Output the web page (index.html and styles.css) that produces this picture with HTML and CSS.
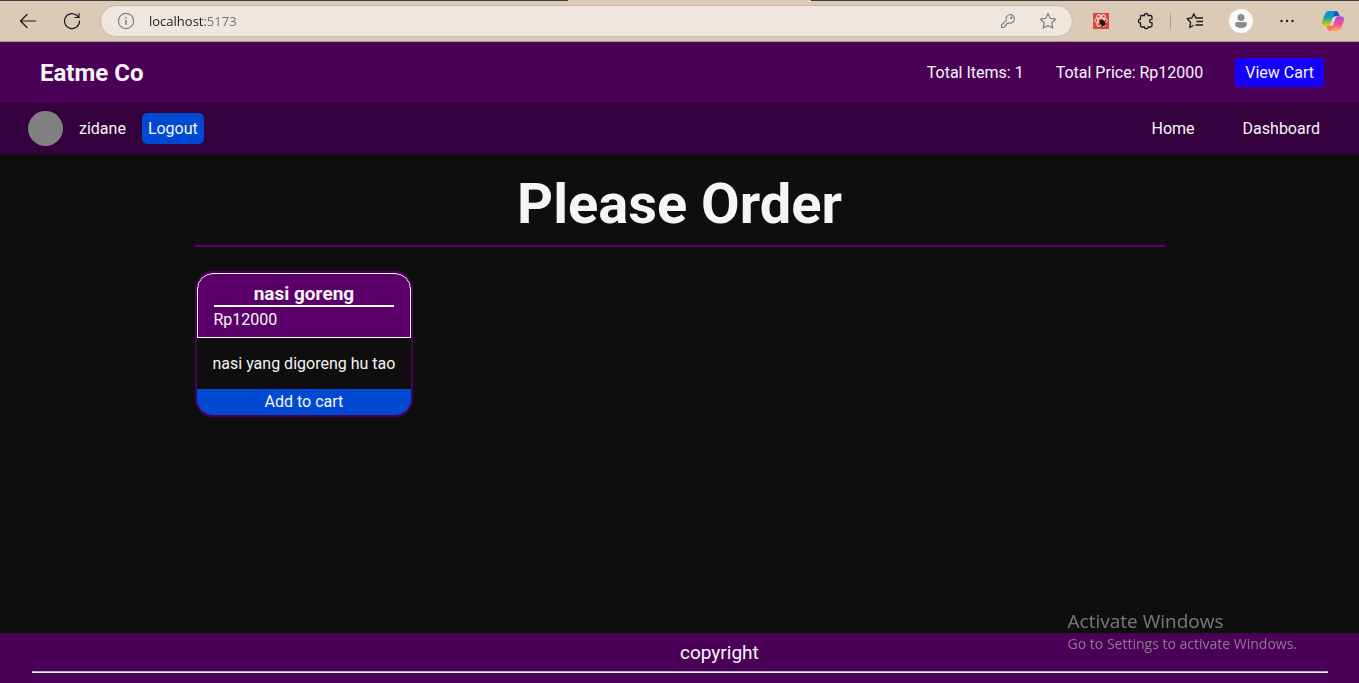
FILE: index.html
```html
<!DOCTYPE html>
<html lang="en">
<head>
  <meta charset="utf-8">
  <meta name="viewport" content="width=device-width, initial-scale=1">
  <title>Eatme Co</title>
  <link rel="stylesheet" href="styles.css">
</head>
<body>
  <div class="browser">
    <div class="tab-strip"><span class="tab-edge"></span><span class="tab-active"></span><span class="tab-edge tab-edge-wide"></span></div>
    <div class="toolbar">
      <button class="tool back" type="button" aria-label="Back">
        <svg width="18" height="18" viewBox="0 0 18 18" fill="none" stroke="#1b1a18" stroke-width="1.2" stroke-linecap="round" stroke-linejoin="round"><path d="M16.500 9H1.500M8 2.500L1.500 9L8 15.500"/></svg>
      </button>
      <button class="tool reload" type="button" aria-label="Refresh">
        <svg width="18" height="18" viewBox="0 0 18 18" fill="none" stroke="#1b1a18" stroke-width="1.2" stroke-linecap="round" stroke-linejoin="round"><path d="M16.500 9A7.500 7.500 0 1 1 14.500 4L16 5.500M16 1.500V5.500H12"/></svg>
      </button>
      <div class="address">
        <svg width="18" height="18" viewBox="0 0 18 18" fill="none" stroke="#827c75" stroke-width="1.2"><circle cx="9" cy="9" r="7.600"/><path d="M9 8V13M9 5V6.400" stroke-width="1.500"/></svg>
        <input class="url" type="text" aria-label="Address" value="localhost:5173">
        <button class="tool key" type="button" aria-label="Passwords">
          <svg width="16" height="16" viewBox="0 0 16 16" fill="none" stroke="#827c75" stroke-width="1.1" stroke-linejoin="round"><path d="M6.300 7.300A4.200 4.200 0 1 1 8.800 9.800L8 10.500H6.500V12H5V13.500L4 14.500H1.500V12Z"/><circle cx="11.200" cy="4.800" r=".7" fill="#827c75"/></svg>
        </button>
        <button class="tool" type="button" aria-label="Add to favorites">
          <svg width="18" height="18" viewBox="0 0 18 18" fill="none" stroke="#827c75" stroke-width="1.2" stroke-linejoin="round"><path d="M9 1.500L11.300 6.300L16.600 7L12.800 10.700L13.700 16L9 13.500L4.300 16L5.200 10.700L1.400 7L6.700 6.300Z"/></svg>
        </button>
      </div>
      <div class="extensions">
        <button class="tool" type="button" aria-label="React extension">
          <svg width="16" height="16" viewBox="0 0 16 16"><path fill="#dc4938" d="M0 0H16V16H0Z"/><g fill="none" stroke="#fbe3df" stroke-width="1"><ellipse cx="8" cy="7.500" rx="6.500" ry="2.600"/><ellipse cx="8" cy="7.500" rx="6.500" ry="2.600" transform="rotate(60 8 7.500)"/><ellipse cx="8" cy="7.500" rx="6.500" ry="2.600" transform="rotate(120 8 7.500)"/></g><g stroke="#24120f" stroke-width=".8"><ellipse cx="9.500" cy="10" rx="2.200" ry="3" fill="#24120f" transform="rotate(-35 9.500 10)"/><path d="M6 8L8 9M6 11L8 10.500M9 14L9 12M10 7L9.500 8M13 8L11 9M13 11L11 10.500"/></g></svg>
        </button>
        <button class="tool" type="button" aria-label="Extensions">
          <svg width="18" height="18" viewBox="0 0 18 18" fill="none" stroke="#1b1a18" stroke-width="1.3" stroke-linejoin="round"><path d="M4.500 3.500H7.500C7.200 .8 11.300 .8 11 3.500H13.500Q15 3.500 15 5V7.300C11.800 7 11.800 11 15 10.700V13.500Q15 15 13.500 15H11C11.300 17.200 7.200 17.200 7.500 15H5Q3.500 15 3.500 13.500V11C.8 11.200 .8 7 3.500 7.200V5Q3.500 3.500 4.500 3.500Z"/></svg>
        </button>
        <span class="divider"></span>
        <button class="tool favorites" type="button" aria-label="Favorites">
          <svg width="18" height="18" viewBox="0 0 18 18" fill="none" stroke="#1b1a18" stroke-width="1.3" stroke-linejoin="round"><path d="M11.500 6H9.800L7.800 1.700L5.800 6L1.200 6.700L4.600 10.200L3.800 15.500L7.600 13.300M11 6H17M10.500 9.500H17M9.500 13H17"/></svg>
        </button>
        <button class="tool" type="button" aria-label="Profile">
          <svg width="24" height="24" viewBox="0 0 24 24"><circle cx="12" cy="12" r="12" fill="#fafafa"/><circle cx="12" cy="8.500" r="3.500" fill="#8c8b89"/><path fill="#8c8b89" d="M8 13H16Q18 13 18 14.500C18 17.500 15.500 19 12 19S6 17.500 6 14.500Q6 13 8 13Z"/></svg>
        </button>
        <button class="tool" type="button" aria-label="Settings and more">
          <svg width="18" height="18" viewBox="0 0 18 18" fill="#1b1a18"><circle cx="3.500" cy="9" r="1.200"/><circle cx="9" cy="9" r="1.200"/><circle cx="14.500" cy="9" r="1.200"/></svg>
        </button>
        <button class="tool" type="button" aria-label="Copilot">
          <svg width="24" height="22" viewBox="0 0 24 22">
            <defs>
              <linearGradient id="cool" x1="0" y1="0" x2="0" y2="1"><stop stop-color="#1585dd"/><stop offset=".45" stop-color="#15a1b1"/><stop offset=".75" stop-color="#91bd48"/><stop offset="1" stop-color="#ffc31c"/></linearGradient>
              <linearGradient id="warm" x1="0" y1="0" x2="0" y2="1"><stop stop-color="#a94bea"/><stop offset=".5" stop-color="#f74a91"/><stop offset="1" stop-color="#ffad52"/></linearGradient>
            </defs>
            <path fill="#1854c5" d="M10 1H15Q17 1 18 4L18.700 6.500H15Q12.500 6.500 12 9Z"/>
            <path fill="#ff714f" d="M5.500 15.500H8Q10 15.500 11 13L14 14L10.500 21H9Q7 21 6 18Z"/>
            <path fill="url(#cool)" d="M8 1H15Q13.500 1.500 13 3.500L10 13.500Q9 16 6.500 16H4Q0 16 1.300 11L3.500 5Q5 1 8 1Z"/>
            <path fill="url(#warm)" d="M17 6.500H20Q24 6.500 22.700 11L20.700 17Q19.500 21 16 21H9Q10.500 20.500 11 18.500L14 9Q14.700 6.500 17 6.500Z"/>
            <path fill="#e6d8ce" d="M13.500 6.500H17Q14.700 6.500 14 9L12 15.500H8Q9.500 15 10 13.500L11.500 8.500Q12 6.500 13.500 6.500Z"/>
          </svg>
        </button>
      </div>
    </div>
  </div>

  <header class="site-header">
    <h2 class="brand">Eatme Co</h2>
    <div class="summary">
      <span>Total Items: 1</span>
      <span>Total Price: Rp12000</span>
      <button class="view-cart" type="button">View Cart</button>
    </div>
  </header>

  <nav class="site-nav">
    <div class="user">
      <span class="avatar"></span>
      <span>zidane</span>
      <button class="logout" type="button">Logout</button>
    </div>
    <div class="links">
      <a href="#home">Home</a>
      <a href="#dashboard">Dashboard</a>
    </div>
  </nav>

  <main class="content">
    <h1 class="title">Please Order</h1>
    <div class="menu">
      <article class="card">
        <div class="card-head">
          <h3 class="card-title">nasi goreng</h3>
          <p class="price">Rp12000</p>
        </div>
        <p class="description">nasi yang digoreng hu tao</p>
        <button class="add" type="button">Add to cart</button>
      </article>
    </div>
  </main>

  <footer class="site-footer">
    <p class="copyright">copyright</p>
    <hr class="rule">
  </footer>

  <aside class="activation">
    <p class="activation-title">Activate Windows</p>
    <p class="activation-text">Go to Settings to activate Windows.</p>
  </aside>
</body>
</html>
```

FILE: styles.css
```css
* {
  box-sizing: border-box;
  margin: 0;
}

body {
  display: flex;
  flex-direction: column;
  min-height: 100vh;
  background: #0e0e0e;
  color: #f5f5f5;
  font: 16px/19px Roboto, sans-serif;
}

button {
  padding: 0;
  border: 0;
  color: inherit;
  font: inherit;
  cursor: pointer;
}

a {
  color: inherit;
  text-decoration: none;
}

/* Browser toolbar */
.browser {
  background: #dbcab5;
  border-bottom: 1px solid #ad9c8a;
}

.tab-strip {
  display: flex;
  height: 1px;
}

.tab-edge {
  flex: 568;
  background: #403c43;
}

.tab-active {
  flex: 243;
}

.tab-edge-wide {
  flex: 548;
}

.toolbar {
  display: flex;
  align-items: center;
  height: 40px;
  padding: 0 14px 0 19px;
}

.tool {
  display: flex;
  background: none;
}

.reload {
  margin-left: 26px;
}

.address {
  display: flex;
  flex: 1;
  align-items: center;
  height: 32px;
  margin: 0 20px 0 19px;
  padding: 0 15px 0 16px;
  border: 1px solid #c7bcb2;
  border-radius: 16px;
  background: #efe7de;
}

/* The host is darker than the port that follows it. */
.url {
  flex: 1;
  min-width: 0;
  margin-left: 14px;
  padding: 0;
  border: 0;
  outline: 0;
  background: linear-gradient(to right, #1b1a18 56px, #746f69 56px);
  background-clip: text;
  color: transparent;
  caret-color: #1b1a18;
  font: 13px/20px "Open Sans", sans-serif;
}

.key {
  margin-right: 23px;
}

.extensions {
  display: flex;
  align-items: center;
  gap: 25px;
}

.extensions .tool:first-child {
  margin-right: 3px;
}

.divider {
  width: 1px;
  height: 16px;
  margin: 0 -10px;
  background: #aa9d8f;
}

/* Site header */
.site-header {
  display: flex;
  align-items: center;
  justify-content: space-between;
  padding: 16px 35px 16px 40px;
  background: #4b0057;
}

.brand {
  font-size: 24px;
  line-height: 28px;
}

.summary {
  display: flex;
  align-items: center;
  gap: 32px;
}

.view-cart {
  padding: 5px 10px;
  border-radius: 4px;
  background: #1500ff;
}

.site-nav {
  display: flex;
  align-items: center;
  justify-content: space-between;
  padding: 8px 39px 8px 28px;
  background: #35003e;
}

.user {
  display: flex;
  align-items: center;
  gap: 16px;
}

.avatar {
  width: 35px;
  height: 35px;
  border-radius: 50%;
  background: #808080;
}

.logout {
  padding: 6px;
  border-radius: 5px;
  background: #004ad3;
}

.links {
  display: flex;
  gap: 48px;
}

/* Menu */
.content {
  flex: 1;
  width: 100%;
  max-width: 970px;
  margin: 0 auto;
  padding-top: 17px;
}

.title {
  padding-bottom: 8px;
  border-bottom: 2px solid #5b006a;
  font-size: 56px;
  line-height: 66px;
  text-align: center;
}

.menu {
  display: flex;
  flex-wrap: wrap;
  gap: 24px;
  padding-top: 24px;
}

.card {
  overflow: hidden;
  border: 2px solid #4b0057;
  border-radius: 18px;
}

.card-head {
  padding: 9px 16px 8px;
  border: 1px solid #fff;
  border-radius: 16px 16px 0 0;
  background: #5b006a;
}

.card-title {
  margin-bottom: 3px;
  border-bottom: 2px solid #fff;
  font-size: 19px;
  line-height: 22px;
  text-align: center;
}

.description {
  padding: 16px;
}

.add {
  width: 100%;
  padding: 3px 0 4px;
  background: #004ad3;
}

/* Footer */
.site-footer {
  padding: 8px 31px 10px 32px;
  background: #4b0057;
}

.copyright {
  padding-left: 50%;
  font-size: 19px;
  line-height: 24px;
}

.rule {
  margin-top: 6px;
  border: 1px solid #f5f5f5;
  border-top-color: #b3a9b5;
}

.activation {
  position: fixed;
  right: 62px;
  bottom: 29px;
  color: rgba(180, 180, 180, 0.65);
  font-family: "Open Sans", sans-serif;
}

.activation-title {
  font-size: 19px;
  line-height: 26px;
}

.activation-text {
  font-size: 14px;
  line-height: 20px;
}
```
